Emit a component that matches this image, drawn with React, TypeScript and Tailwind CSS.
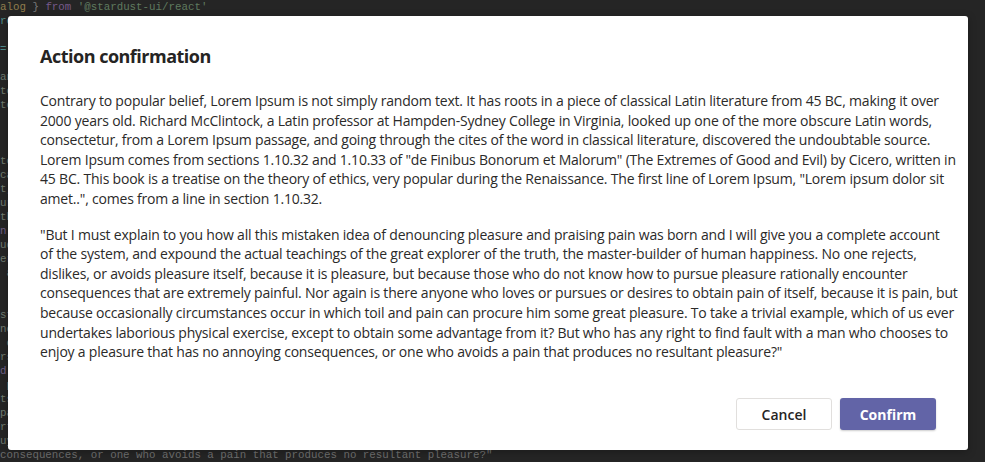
const codeLines: { text: string; color: string }[] = [
  { text: "alog } from '@stardust-ui/react'", color: '' },
  { text: 're', color: '#4f8a8a' },
  { text: '', color: '' },
  { text: '=', color: '#4f8a8a' },
  { text: '', color: '' },
  { text: 'an', color: '#6f7a6f' },
  { text: 'to', color: '#6f7a6f' },
  { text: 'to', color: '#6f7a6f' },
  { text: '', color: '' },
  { text: '', color: '' },
  { text: '', color: '' },
  { text: 'to', color: '#6f7a6f' },
  { text: 'ca', color: '#6f7a6f' },
  { text: 't,', color: '#6f7a6f' },
  { text: 'ur', color: '#6f7a6f' },
  { text: 'th', color: '#6f7a6f' },
  { text: 'n', color: '#6f5f86' },
  { text: 'ud', color: '#6f7a6f' },
  { text: 'er', color: '#6f7a6f' },
  { text: ' a', color: '#6f7a6f' },
  { text: '', color: '' },
  { text: '', color: '' },
  { text: 'st', color: '#6f7a6f' },
  { text: 'no', color: '#6f7a6f' },
  { text: ' o', color: '#6f7a6f' },
  { text: 'rs', color: '#6f7a6f' },
  { text: 'd', color: '#6f5f86' },
  { text: ' p', color: '#6f7a6f' },
  { text: 'ts', color: '#6f7a6f' },
  { text: 'pa', color: '#6f7a6f' },
  { text: 'rt', color: '#6f7a6f' },
  { text: 'uy', color: '#6f7a6f' },
  { text: 'consequences, or one who avoids a pain that produces no resultant pleasure?"', color: '#6f6f6f' },
];

const paragraphOne = [
  'Contrary to popular belief, Lorem Ipsum is not simply random text. It has roots in a piece of classical Latin literature from 45 BC, making it over',
  '2000 years old. Richard McClintock, a Latin professor at Hampden-Sydney College in Virginia, looked up one of the more obscure Latin words,',
  'consectetur, from a Lorem Ipsum passage, and going through the cites of the word in classical literature, discovered the undoubtable source.',
  'Lorem Ipsum comes from sections 1.10.32 and 1.10.33 of "de Finibus Bonorum et Malorum" (The Extremes of Good and Evil) by Cicero, written in',
  '45 BC. This book is a treatise on the theory of ethics, very popular during the Renaissance. The first line of Lorem Ipsum, "Lorem ipsum dolor sit',
  'amet..", comes from a line in section 1.10.32.',
];

const paragraphTwo = [
  '"But I must explain to you how all this mistaken idea of denouncing pleasure and praising pain was born and I will give you a complete account',
  'of the system, and expound the actual teachings of the great explorer of the truth, the master-builder of human happiness. No one rejects,',
  'dislikes, or avoids pleasure itself, because it is pleasure, but because those who do not know how to pursue pleasure rationally encounter',
  'consequences that are extremely painful. Nor again is there anyone who loves or pursues or desires to obtain pain of itself, because it is pain, but',
  'because occasionally circumstances occur in which toil and pain can procure him some great pleasure. To take a trivial example, which of us ever',
  'undertakes laborious physical exercise, except to obtain some advantage from it? But who has any right to find fault with a man who chooses to',
  'enjoy a pleasure that has no annoying consequences, or one who avoids a pain that produces no resultant pleasure?"',
];

function CodeBackground() {
  return (
    <pre className="h-full overflow-hidden whitespace-pre font-['Liberation_Mono',monospace] text-[10.8px] leading-[14px] text-[#6f6f6f]">
      {codeLines.map((line, idx) =>
        idx === 0 ? (
          <div key={idx}>
            <span className="text-[#8f7c4c]">alog</span> <span className="text-[#7a7a7a]">{'}'}</span>{' '}
            <span className="text-[#76598a]">from</span> <span className="text-[#5f7a5f]">'@stardust-ui/react'</span>
          </div>
        ) : (
          <div key={idx} style={{ color: line.color || undefined }}>
            {line.text || ' '}
          </div>
        ),
      )}
    </pre>
  );
}

function ConfirmDialog() {
  return (
    <div className="absolute left-2 top-4 flex h-[434px] w-[960px] flex-col rounded-[3px] bg-white px-8 pb-5 pt-7 text-[#252423] shadow-[0_2px_8px_rgba(0,0,0,0.25)]">
      <h2 className="text-[18px] font-bold leading-6 tracking-[-0.5px]">Action confirmation</h2>
      <div className="mt-[23px] -mr-6 text-[14px] leading-[19.6px] tracking-[-0.2px] text-[#2b2a29]">
        <p className="whitespace-nowrap">
          {paragraphOne.map((l, i) => (
            <span key={i} className="block">{l}</span>
          ))}
        </p>
        <p className="mt-4 whitespace-nowrap">
          {paragraphTwo.map((l, i) => (
            <span key={i} className="block">{l}</span>
          ))}
        </p>
      </div>
      <div className="mt-auto flex justify-end gap-2">
        <button className="h-8 w-24 rounded-[3px] border border-[#e1dfdd] bg-white text-[14px] font-semibold text-[#252423]">
          Cancel
        </button>
        <button className="h-8 w-24 rounded-[3px] bg-[#6264a7] text-[14px] font-bold text-white shadow-[0_1px_2px_rgba(0,0,0,0.2)]">
          Confirm
        </button>
      </div>
    </div>
  );
}

export default function App() {
  return (
    <div className="relative h-[462px] w-[985px] overflow-hidden bg-[#252525] font-['Open_Sans','Noto_Sans',sans-serif]">
      <CodeBackground />
      <ConfirmDialog />
    </div>
  );
}
